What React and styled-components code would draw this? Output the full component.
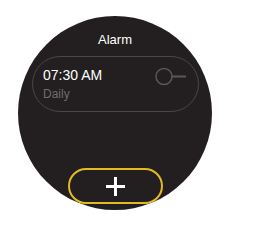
import React from 'react';
import styled, { createGlobalStyle } from 'styled-components';

const GlobalStyle = createGlobalStyle`
  html, body {
    margin: 0;
    padding: 0;
    background: #ffffff;
  }
  body {
    font-family: 'Liberation Sans', Arial, sans-serif;
  }
`;

const Page = styled.div`
  padding: 16px 0 0 18px;
`;

const Watch = styled.div`
  width: 194px;
  height: 194px;
  border-radius: 50%;
  background: #231f20;
  overflow: hidden;
  display: flex;
  flex-direction: column;
  align-items: center;
  box-sizing: border-box;
`;

const Title = styled.div`
  margin-top: 16px;
  color: #ffffff;
  font-size: 13px;
  line-height: 15px;
`;

const Card = styled.div`
  margin-top: 9px;
  margin-left: 1px;
  width: 167px;
  height: 56px;
  box-sizing: border-box;
  border: 1.5px solid #4a4748;
  border-radius: 28px;
  padding: 10px 11px 0 10px;
  display: flex;
  justify-content: space-between;
  align-items: flex-start;
`;

const Texts = styled.div`
  display: flex;
  flex-direction: column;
`;

const Time = styled.div`
  color: #ffffff;
  font-size: 14px;
  line-height: 16px;
`;

const Repeat = styled.div`
  margin-top: 4px;
  color: #6f6c6d;
  font-size: 12px;
  line-height: 14px;
`;

const Toggle = styled.svg`
  flex-shrink: 0;
`;

const AddButton = styled.button`
  margin-top: auto;
  margin-bottom: 6px;
  margin-left: 1px;
  width: 95px;
  height: 36px;
  box-sizing: border-box;
  border: 2px solid #e2bb21;
  border-radius: 18px;
  background: transparent;
  display: flex;
  align-items: center;
  justify-content: center;
  padding: 0;
`;

export default function App() {
  return (
    <>
      <GlobalStyle />
      <Page>
        <Watch>
          <Title>Alarm</Title>
          <Card>
            <Texts>
              <Time>07:30 AM</Time>
              <Repeat>Daily</Repeat>
            </Texts>
            <Toggle width="32" height="19" viewBox="0 0 32 19">
              <circle cx="9" cy="9.5" r="8" fill="none" stroke="#5a5758" strokeWidth="1.5" />
              <line x1="17" y1="9.5" x2="31" y2="9.5" stroke="#5a5758" strokeWidth="2" />
            </Toggle>
          </Card>
          <AddButton aria-label="Add alarm">
            <svg width="21" height="21" viewBox="0 0 21 21">
              <line x1="10.5" y1="1" x2="10.5" y2="20" stroke="#ffffff" strokeWidth="3" />
              <line x1="1" y1="10.5" x2="20" y2="10.5" stroke="#ffffff" strokeWidth="3" />
            </svg>
          </AddButton>
        </Watch>
      </Page>
    </>
  );
}
